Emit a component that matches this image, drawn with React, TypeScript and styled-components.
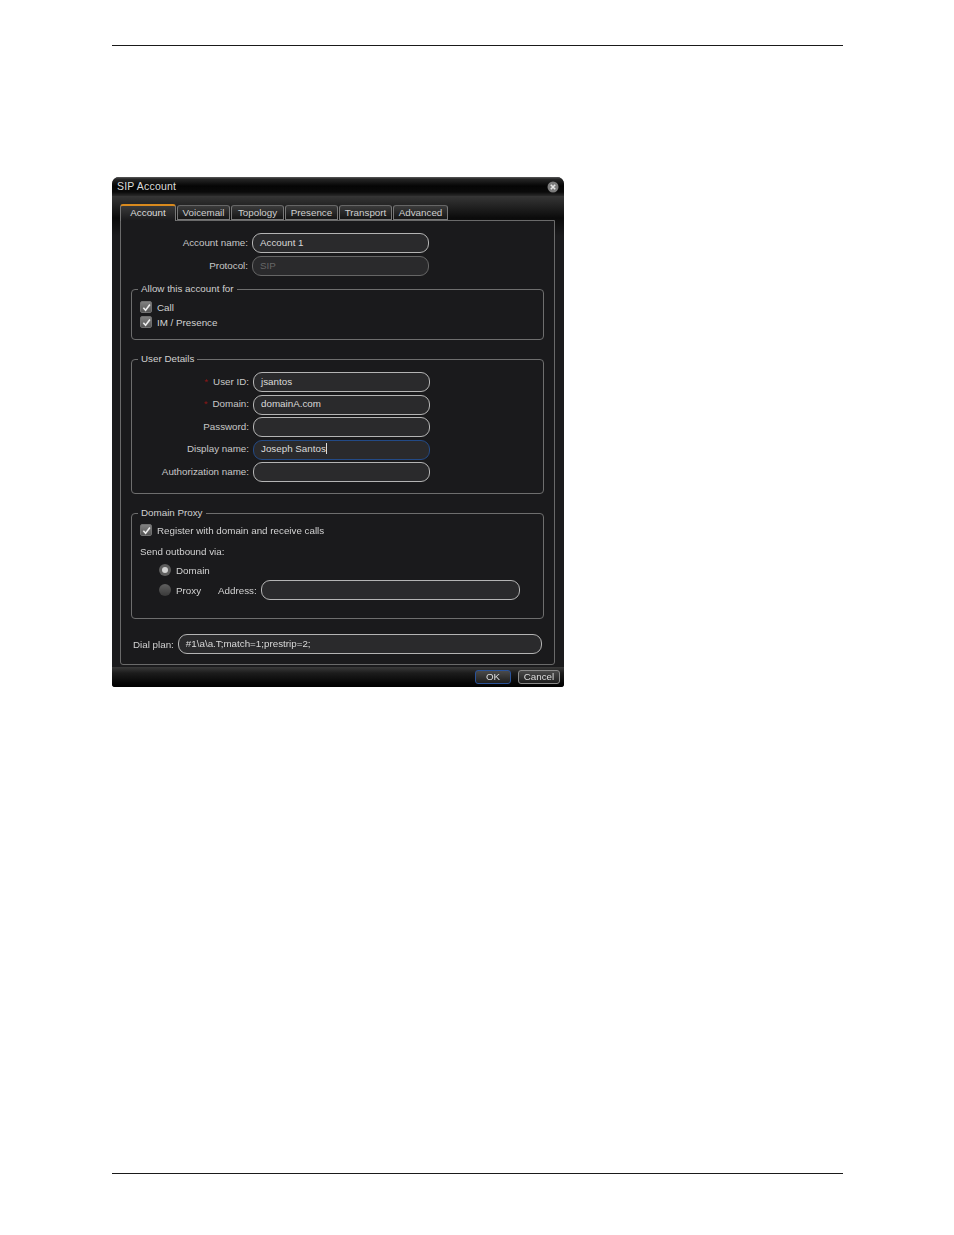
import styled, { createGlobalStyle } from "styled-components";

const GlobalStyle = createGlobalStyle`
	html, body {
		margin: 0;
		padding: 0;
		background: #fff;
	}
	* {
		box-sizing: border-box;
	}
`;

const Page = styled.div`
	width: 954px;
	height: 1235px;
	padding: 45px 111px 0 112px;
	font-family: "Liberation Sans", Arial, sans-serif;
	font-size: 9.8px;
	color: #d2d2d2;
`;

const Rule = styled.div`
	height: 1px;
	background: #1a1a1a;
`;

const Dialog = styled.div`
	width: 452px;
	height: 510px;
	margin-top: 131px;
	margin-bottom: 486px;
	border-radius: 7px 7px 3px 3px;
	overflow: hidden;
	background: #1b1b1d;
	display: flex;
	flex-direction: column;
	filter: blur(0.35px);
`;

const TitleBar = styled.div`
	height: 19px;
	flex: none;
	padding: 0 5px 2px;
	display: flex;
	align-items: center;
	justify-content: space-between;
	background: linear-gradient(#5c5c5c 0, #262626 2px, #050505 9px, #0a0a0a 15px, #2a2a2a 19px);
	font-size: 10.5px;
	letter-spacing: 0.2px;
	color: #dcdcdc;
`;

const CloseDot = styled.svg`
	width: 12px;
	height: 12px;
	margin-top: 2px;
`;

const Body = styled.div`
	flex: 1;
	padding: 7px 9px 2px 8px;
	display: flex;
	flex-direction: column;
	background: linear-gradient(#363636 0, #0b0b0b 22px, #1b1b1d 40px);
`;

const TabRow = styled.div`
	display: flex;
	gap: 1px;
	height: 17px;
	flex: none;
	align-items: flex-end;
`;

const Tab = styled.div<{ $width: number; $active?: boolean }>`
	width: ${(p) => p.$width}px;
	height: ${(p) => (p.$active ? 17 : 15)}px;
	padding-bottom: ${(p) => (p.$active ? 3 : 1)}px;
	display: flex;
	align-items: center;
	justify-content: center;
	font-size: 9.8px;
	color: ${(p) => (p.$active ? "#dedede" : "#cfcfcf")};
	border: 1px solid #777;
	border-bottom: ${(p) => (p.$active ? "none" : "1px solid #777")};
	border-top: ${(p) => (p.$active ? "2px solid #d98a1e" : "1px solid #666")};
	border-radius: 3px 3px 0 0;
	background: ${(p) =>
		p.$active ? "linear-gradient(#3a3a3a, #19191b)" : "linear-gradient(#3b3b3b, #151515)"};
	position: relative;
	z-index: ${(p) => (p.$active ? 1 : 0)};
	margin-bottom: ${(p) => (p.$active ? -1 : 0)}px;
`;

const Pane = styled.div`
	flex: 1;
	border: 1px solid #6a6a6a;
	border-radius: 0 0 3px 3px;
	background: #1a1a1c;
	padding: 12px 10px 0 10px;
	display: flex;
	flex-direction: column;
`;

const TopForm = styled.div`
	display: grid;
	grid-template-columns: 117px 177px;
	column-gap: 4px;
	row-gap: 3px;
	grid-auto-rows: 20px;
`;

const Label = styled.div`
	display: flex;
	align-items: center;
	justify-content: flex-end;
	gap: 5px;
	padding-bottom: 2px;
	white-space: nowrap;
	color: #c8c8c8;
`;

const Star = styled.span`
	color: #8c1616;
`;

const Field = styled.div<{ $focused?: boolean; $disabled?: boolean }>`
	height: 20px;
	display: flex;
	align-items: center;
	padding: 0 0 2px 7px;
	border: 1px solid ${(p) => (p.$focused ? "#234a86" : p.$disabled ? "#666" : "#b4b4b4")};
	border-radius: 9px;
	background: #2a2a2c;
	color: ${(p) => (p.$disabled ? "#666" : "#dadada")};
	font-size: 9.8px;
	white-space: nowrap;
`;

const Caret = styled.span`
	width: 1px;
	height: 11px;
	background: #ddd;
`;

const Group = styled.fieldset<{ $top: number; $height: number }>`
	margin: ${(p) => p.$top}px 0 0 0;
	height: ${(p) => p.$height}px;
	padding: 0;
	border: 1px solid #6e6e6e;
	border-radius: 4px;
	min-width: 0;
`;

const Legend = styled.legend`
	margin-left: 6px;
	padding: 0 3px;
	line-height: 12px;
	font-size: 9.8px;
	color: #d0d0d0;
`;

const CheckList = styled.div`
	padding: 6px 0 0 8px;
	display: flex;
	flex-direction: column;
	gap: 3px;
`;

const CheckRow = styled.div`
	height: 12px;
	display: flex;
	align-items: center;
	gap: 5px;
`;

const Box = styled.span`
	width: 12px;
	height: 12px;
	flex: none;
	border-radius: 2px;
	background: linear-gradient(#808080, #555);
	border: 1px solid #707070;
	display: flex;
	align-items: center;
	justify-content: center;
`;

const Tick = styled.svg`
	width: 9px;
	height: 9px;
`;

const DetailsForm = styled.div`
	padding-top: 7px;
	display: grid;
	grid-template-columns: 117px 177px;
	column-gap: 4px;
	row-gap: 2.5px;
	grid-auto-rows: 20px;
`;

const ProxyBody = styled.div`
	padding: 5px 0 0 8px;
	display: flex;
	flex-direction: column;
`;

const SendVia = styled.div`
	margin-top: 9px;
	height: 12px;
	display: flex;
	align-items: center;
`;

const RadioRow = styled.div<{ $top: number }>`
	margin-top: ${(p) => p.$top}px;
	margin-left: 19px;
	height: 20px;
	display: flex;
	align-items: center;
`;

const Radio = styled.span<{ $on?: boolean }>`
	width: 12px;
	height: 12px;
	flex: none;
	border-radius: 50%;
	background: ${(p) => (p.$on ? "#5e5e5e" : "linear-gradient(#606060, #3a3a3a)")};
	display: flex;
	align-items: center;
	justify-content: center;
	margin-right: 5px;
	&::after {
		content: "";
		display: ${(p) => (p.$on ? "block" : "none")};
		width: 6px;
		height: 6px;
		border-radius: 50%;
		background: #d4d4d4;
	}
`;

const RadioText = styled.span`
	width: 42px;
`;

const Address = styled(Field)`
	width: 259px;
	margin-left: 4px;
`;

const DialRow = styled.div`
	margin-top: 15px;
	margin-left: 2px;
	display: flex;
	align-items: center;
	gap: 4px;
`;

const DialField = styled(Field)`
	width: 364px;
`;

const Footer = styled.div`
	height: 20px;
	flex: none;
	display: flex;
	align-items: center;
	justify-content: flex-end;
	gap: 7px;
	padding: 0 4px 0 0;
	background: linear-gradient(#3a3a3a 0, #1c1c1c 6px, #060606 16px, #000 20px);
`;

const Button = styled.div<{ $primary?: boolean; $width: number }>`
	width: ${(p) => p.$width}px;
	height: 14px;
	padding-bottom: 1px;
	display: flex;
	align-items: center;
	justify-content: center;
	font-size: 9.8px;
	border-radius: 3px;
	color: #dedede;
	border: 1px solid ${(p) => (p.$primary ? "#2a5298" : "#8a8a8a")};
	background: linear-gradient(#4a4a4a, #1e1e1e);
`;

const tabs = [
	{ name: "Voicemail", width: 53 },
	{ name: "Topology", width: 53 },
	{ name: "Presence", width: 53 },
	{ name: "Transport", width: 53 },
	{ name: "Advanced", width: 55 },
];

function Check() {
	return (
		<Box>
			<Tick viewBox="0 0 10 10">
				<path d="M1.5 5.2 L4 8 L8.8 1.8" fill="none" stroke="#ececec" strokeWidth="1.8" />
			</Tick>
		</Box>
	);
}

function App() {
	return (
		<>
			<GlobalStyle />
			<Page>
				<Rule />
				<Dialog>
					<TitleBar>
						SIP Account
						<CloseDot viewBox="0 0 12 12">
							<circle cx="6" cy="6" r="5.5" fill="#7c7c7c" />
							<path d="M3.8 3.8 L8.2 8.2 M8.2 3.8 L3.8 8.2" stroke="#e4e4e4" strokeWidth="1.6" />
						</CloseDot>
					</TitleBar>
					<Body>
						<TabRow>
							<Tab $width={56} $active>
								Account
							</Tab>
							{tabs.map((t) => (
								<Tab key={t.name} $width={t.width}>
									{t.name}
								</Tab>
							))}
						</TabRow>
						<Pane>
							<TopForm>
								<Label>Account name:</Label>
								<Field>Account 1</Field>
								<Label>Protocol:</Label>
								<Field $disabled>SIP</Field>
							</TopForm>
							<Group $top={7} $height={57}>
								<Legend>Allow this account for</Legend>
								<CheckList>
									<CheckRow>
										<Check />
										Call
									</CheckRow>
									<CheckRow>
										<Check />
										IM / Presence
									</CheckRow>
								</CheckList>
							</Group>
							<Group $top={13} $height={141}>
								<Legend>User Details</Legend>
								<DetailsForm>
									<Label>
										<Star>*</Star>User ID:
									</Label>
									<Field>jsantos</Field>
									<Label>
										<Star>*</Star>Domain:
									</Label>
									<Field>domainA.com</Field>
									<Label>Password:</Label>
									<Field />
									<Label>Display name:</Label>
									<Field $focused>
										Joseph Santos
										<Caret />
									</Field>
									<Label>Authorization name:</Label>
									<Field />
								</DetailsForm>
							</Group>
							<Group $top={13} $height={112}>
								<Legend>Domain Proxy</Legend>
								<ProxyBody>
									<CheckRow>
										<Check />
										Register with domain and receive calls
									</CheckRow>
									<SendVia>Send outbound via:</SendVia>
									<RadioRow $top={3}>
										<Radio $on />
										<RadioText>Domain</RadioText>
									</RadioRow>
									<RadioRow $top={0}>
										<Radio />
										<RadioText>Proxy</RadioText>
										Address:
										<Address />
									</RadioRow>
								</ProxyBody>
							</Group>
							<DialRow>
								Dial plan:
								<DialField>#1\a\a.T;match=1;prestrip=2;</DialField>
							</DialRow>
						</Pane>
					</Body>
					<Footer>
						<Button $primary $width={36}>
							OK
						</Button>
						<Button $width={42}>Cancel</Button>
					</Footer>
				</Dialog>
				<Rule />
			</Page>
		</>
	);
}

export default App;
